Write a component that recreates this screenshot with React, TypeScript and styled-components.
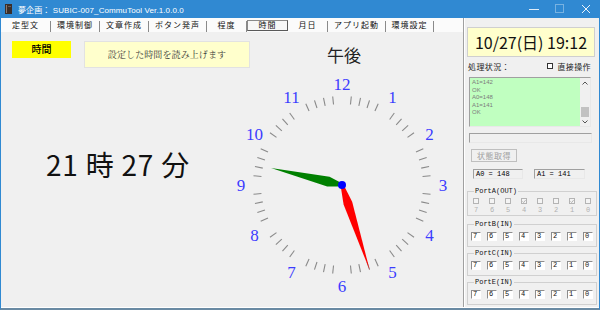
import React from "react";
import styled, { createGlobalStyle } from "styled-components";

const GlobalStyle = createGlobalStyle`
  html, body { margin: 0; padding: 0; background: #f0f0f0; }
  body { font-family: "Noto Sans CJK JP", "Noto Sans", sans-serif; color: #000; }
  * { box-sizing: border-box; }
`;

const Window = styled.div`
  width: 600px;
  height: 310px;
  display: flex;
  flex-direction: column;
  border-left: 1px solid #3089d2;
  border-right: 1px solid #3089d2;
  border-bottom: 2px solid #6a8aa3;
  background: #f0f0f0;
  overflow: hidden;
`;

const TitleBar = styled.div`
  height: 18px;
  flex: none;
  display: flex;
  align-items: center;
  padding-left: 4px;
  background: #3089d2;
  color: #fff;
`;

const TitleText = styled.span`
  margin-left: 6px;
  font-family: "Liberation Sans", "Noto Sans CJK JP", sans-serif;
  font-size: 8px;
  letter-spacing: 0.1px;
  white-space: nowrap;
`;

const Controls = styled.div`
  margin-left: auto;
  display: flex;
  height: 100%;
`;

const ControlButton = styled.div`
  width: 26px;
  height: 100%;
  display: flex;
  align-items: center;
  justify-content: center;
`;

const Body = styled.div`
  flex: 1;
  display: flex;
  border-bottom: 1px solid #fff;
  min-height: 0;
`;

const LeftPane = styled.div`
  width: 462px;
  display: flex;
  flex-direction: column;
`;

const TabRow = styled.div`
  height: 14px;
  display: flex;
  background: #fbfbfb;
`;

const Tab = styled.div<{ $w: number; $active?: boolean }>`
  width: ${(p) => p.$w}px;
  height: 11px;
  margin-top: ${(p) => (p.$active ? 2 : 3)}px;
  display: flex;
  align-items: center;
  justify-content: center;
  padding-bottom: ${(p) => (p.$active ? 1 : 3)}px;
  font-size: 8px;
  letter-spacing: 1px;
  line-height: 1;
  white-space: nowrap;
  color: #111;
  border-right: 1px solid #8a8a8a;
  ${(p) =>
    p.$active &&
    `
    border: 1px solid #8a8a8a;
    border-right-color: #5a5a5a;
    border-bottom-color: #5a5a5a;
    background: #f7f7f7;
  `}
`;

const LeftContent = styled.div`
  flex: 1;
  display: flex;
  flex-direction: column;
  padding: 9px 0 0 11px;
`;

const TopRow = styled.div`
  height: 27px;
  display: flex;
  align-items: flex-start;
`;

const ModeLabel = styled.div`
  width: 59px;
  height: 17px;
  background: #ffff00;
  display: flex;
  justify-content: center;
  padding-top: 2px;
  font-size: 10px;
  line-height: 11px;
  font-weight: 500;
`;

const InfoBox = styled.div`
  margin-left: 13px;
  width: 166px;
  height: 27px;
  background: #ffffcc;
  border: 1px solid #e2e2e2;
  display: flex;
  align-items: center;
  justify-content: center;
  font-family: "Noto Serif CJK JP", "Noto Sans CJK JP", serif;
  font-size: 9px;
  color: #333;
  letter-spacing: 0.1px;
`;

const Period = styled.div`
  margin-left: 77px;
  align-self: center;
  font-size: 17px;
  line-height: 1;
  color: #222;
`;

const ClockRow = styled.div`
  display: flex;
  margin-top: 7px;
`;

const TimeText = styled.div`
  width: 220px;
  padding: 74px 8px 0 0;
  text-align: center;
  font-size: 28px;
  line-height: 1.1;
  color: #111;
  white-space: nowrap;
  letter-spacing: 0.8px;
`;

const ClockFace = styled.svg`
  width: 220px;
  height: 220px;
  flex: none;
`;

const RightPane = styled.div`
  width: 136px;
  display: flex;
  flex-direction: column;
  border-left: 1px solid #a0a0a0;
  box-shadow: inset 1px 0 #fff;
  padding: 9px 0 0 3px;
`;

const DateBox = styled.div`
  width: 128px;
  height: 30px;
  background: #ffffcc;
  border: 1px solid #cfcfcf;
  display: flex;
  align-items: center;
  justify-content: center;
  font-size: 16px;
  color: #111;
  white-space: nowrap;
`;

const StatusRow = styled.div`
  margin-top: 4px;
  height: 10px;
  display: flex;
  align-items: center;
  padding: 0 8px 0 1px;
  font-size: 8px;
  letter-spacing: 0.4px;
  color: #222;
`;

const CheckLabel = styled.label`
  margin-left: auto;
  display: flex;
  align-items: center;
  gap: 4px;
`;

const Check = styled.span<{ $disabled?: boolean }>`
  width: 6px;
  height: 6px;
  flex: none;
  border: 1px solid ${(p) => (p.$disabled ? "#b4b4b4" : "#333")};
  background: ${(p) => (p.$disabled ? "#f4f4f4" : "#fff")};
  display: flex;
  align-items: center;
  justify-content: center;
`;

const LogBox = styled.div`
  margin: 6px 0 0 2px;
  width: 122px;
  height: 50px;
  display: flex;
  border: 1px solid #a0a0a0;
  border-right-color: #e8e8e8;
  border-bottom-color: #e8e8e8;
  background: #c0ffc0;
`;

const LogText = styled.div`
  flex: 1;
  padding: 1px 0 0 2px;
  font-family: "Liberation Sans", sans-serif;
  font-size: 6px;
  line-height: 7.5px;
  color: #7c7c7c;
`;

const ScrollBar = styled.div`
  width: 10px;
  background: #f0f0f0;
  display: flex;
  flex-direction: column;
  align-items: center;
  justify-content: space-between;
  padding: 3px 0 2px;
`;

const ScrollThumb = styled.div`
  width: 8px;
  height: 10px;
  margin-top: 19px;
  background: #c2c2c2;
`;

const EmptyField = styled.div`
  margin: 6px 0 0 2px;
  width: 123px;
  height: 10px;
  border: 1px solid #a0a0a0;
  border-right-color: #e8e8e8;
  border-bottom-color: #e8e8e8;
  background: #f0f0f0;
`;

const DisabledButton = styled.button`
  margin: 6px 0 0 4px;
  width: 46px;
  height: 13px;
  padding: 0;
  border: 1px solid #bfbfbf;
  background: #f0f0f0;
  color: #a0a0a0;
  font-family: "Noto Sans CJK JP", sans-serif;
  font-size: 8px;
  letter-spacing: 0.5px;
  line-height: 1;
`;

const ValueRow = styled.div`
  margin: 7px 0 0 6px;
  display: flex;
  gap: 11px;
`;

const ValueField = styled.div<{ $w: number }>`
  width: ${(p) => p.$w}px;
  height: 10px;
  border: 1px solid #a0a0a0;
  border-right-color: #e8e8e8;
  border-bottom-color: #e8e8e8;
  background: #f0f0f0;
  padding-left: 2px;
  font-family: "Liberation Mono", monospace;
  font-size: 7px;
  line-height: 8px;
  white-space: pre;
`;

const PortGroup = styled.fieldset<{ $top: number; $h: number }>`
  margin: ${(p) => p.$top}px 0 0 0;
  width: 130px;
  height: ${(p) => p.$h}px;
  padding: 0;
  border: 1px solid #d0d0d0;
  min-inline-size: 0;
`;

const PortLegend = styled.legend`
  margin-left: 6px;
  padding: 0 1px;
  font-family: "Liberation Mono", monospace;
  font-size: 7px;
  line-height: 8px;
  color: #111;
`;

const BitGrid = styled.div<{ $pt: number }>`
  display: grid;
  grid-template-columns: repeat(8, 1fr);
  padding-top: ${(p) => p.$pt}px;
`;

const BitCell = styled.div`
  display: flex;
  flex-direction: column;
  align-items: center;
  gap: 3px;
`;

const BitNumber = styled.span`
  font-family: "Liberation Mono", monospace;
  font-size: 7px;
  line-height: 6px;
  color: #b0b0b0;
`;

const BitBox = styled.div`
  width: 10px;
  height: 9px;
  border: 1px solid #8c8c8c;
  border-right-color: #fff;
  border-bottom-color: #fff;
  background: #fff;
  padding-left: 1px;
  font-family: "Liberation Mono", monospace;
  font-size: 7px;
  line-height: 7px;
  color: #111;
`;

const tabs = [
  { label: "定型文", w: 50 },
  { label: "環境制御", w: 49 },
  { label: "文章作成", w: 49 },
  { label: "ボタン発声", w: 58 },
  { label: "程度", w: 40 },
  { label: "時間", w: 41, active: true },
  { label: "月日", w: 40 },
  { label: "アプリ起動", w: 58 },
  { label: "環境設定", w: 48 },
];

const bits = [7, 6, 5, 4, 3, 2, 1, 0];
const portAChecked = [4, 1];
const logLines = ["A1=142", "OK", "A0=148", "A1=141", "OK"];

const CheckMark = () => (
  <svg width="5" height="5" viewBox="0 0 5 5">
    <path d="M0.6 2.4 L2 3.8 L4.5 0.8" fill="none" stroke="#9a9a9a" strokeWidth="0.9" />
  </svg>
);

const Clock = ({ hour, minute }: { hour: number; minute: number }) => {
  const c = 110;
  const ticks = [];
  for (let m = 0; m < 60; m++) {
    if (m % 5 === 0) continue;
    const a = (m * 6 * Math.PI) / 180;
    const s = Math.sin(a);
    const k = Math.cos(a);
    ticks.push(
      <line key={m} x1={c + 81 * s} y1={c - 81 * k} x2={c + 89 * s} y2={c - 89 * k} />
    );
  }
  const nums = Array.from({ length: 12 }, (_, i) => {
    const h = i + 1;
    const a = (h * 30 * Math.PI) / 180;
    return (
      <text key={h} x={c + 101 * Math.sin(a)} y={c - 101 * Math.cos(a)}>
        {h}
      </text>
    );
  });
  const minAngle = minute * 6;
  const hourAngle = ((hour % 12) + minute / 60) * 30;
  return (
    <ClockFace viewBox="0 0 220 220">
      <g stroke="#8a8a8a" strokeWidth="1.1">{ticks}</g>
      <g
        fill="#3c3cff"
        fontFamily="'Liberation Serif', serif"
        fontSize="17"
        textAnchor="middle"
        dominantBaseline="central"
      >
        {nums}
      </g>
      <polygon
        points="-1.5,0 1.5,0 5,-14 0,-73 -5,-14"
        fill="#008000"
        transform={`translate(${c} ${c}) rotate(${hourAngle})`}
      />
      <polygon
        points="-1.5,0 1.5,0 4.5,-19 0,-90 -4.5,-19"
        fill="#ff0000"
        transform={`translate(${c} ${c}) rotate(${minAngle})`}
      />
      <circle cx={c} cy={c} r="4" fill="#0000ff" />
    </ClockFace>
  );
};

export default function App() {
  return (
    <>
      <GlobalStyle />
      <Window>
        <TitleBar>
          <svg width="7" height="10" viewBox="0 0 7 10">
            <rect x="0" y="0" width="7" height="10" fill="#3b2f2a" />
            <rect x="1" y="1" width="1" height="8" fill="#8a7a70" />
            <rect x="3" y="2" width="3" height="1" fill="#6d5d55" />
          </svg>
          <TitleText>夢企画： SUBIC-007_CommuTool Ver.1.0.0.0</TitleText>
          <Controls>
            <ControlButton>
              <svg width="10" height="10" viewBox="0 0 10 10">
                <line x1="0" y1="5.5" x2="10" y2="5.5" stroke="rgba(255,255,255,0.85)" />
              </svg>
            </ControlButton>
            <ControlButton>
              <svg width="10" height="10" viewBox="0 0 10 10">
                <rect x="0.5" y="0.5" width="8" height="8" fill="none" stroke="rgba(255,255,255,0.35)" />
              </svg>
            </ControlButton>
            <ControlButton>
              <svg width="10" height="10" viewBox="0 0 10 10">
                <path d="M1 1 L9 9 M9 1 L1 9" stroke="rgba(255,255,255,0.9)" strokeWidth="1" />
              </svg>
            </ControlButton>
          </Controls>
        </TitleBar>
        <Body>
          <LeftPane>
            <TabRow>
              {tabs.map((t) => (
                <Tab key={t.label} $w={t.w} $active={t.active}>
                  {t.label}
                </Tab>
              ))}
            </TabRow>
            <LeftContent>
              <TopRow>
                <ModeLabel>時間</ModeLabel>
                <InfoBox>設定した時間を読み上げます</InfoBox>
                <Period>午後</Period>
              </TopRow>
              <ClockRow>
                <TimeText>21 時 27 分</TimeText>
                <Clock hour={21} minute={27} />
              </ClockRow>
            </LeftContent>
          </LeftPane>
          <RightPane>
            <DateBox>10/27(日) 19:12</DateBox>
            <StatusRow>
              <span>処理状況：</span>
              <CheckLabel>
                <Check />
                直接操作
              </CheckLabel>
            </StatusRow>
            <LogBox>
              <LogText>
                {logLines.map((l, i) => (
                  <div key={i}>{l}</div>
                ))}
              </LogText>
              <ScrollBar>
                <svg width="6" height="4" viewBox="0 0 6 4">
                  <path d="M0.5 3.5 L3 1 L5.5 3.5" fill="none" stroke="#555" />
                </svg>
                <ScrollThumb />
                <svg width="6" height="4" viewBox="0 0 6 4">
                  <path d="M0.5 0.5 L3 3 L5.5 0.5" fill="none" stroke="#555" />
                </svg>
              </ScrollBar>
            </LogBox>
            <EmptyField />
            <DisabledButton disabled>状態取得</DisabledButton>
            <ValueRow>
              <ValueField $w={50}>A0 = 148</ValueField>
              <ValueField $w={51}>A1 = 141</ValueField>
            </ValueRow>
            <PortGroup $top={8} $h={29}>
              <PortLegend>PortA(OUT)</PortLegend>
              <BitGrid $pt={3}>
                {bits.map((b) => (
                  <BitCell key={b}>
                    <Check $disabled>{portAChecked.includes(b) && <CheckMark />}</Check>
                    <BitNumber>{b}</BitNumber>
                  </BitCell>
                ))}
              </BitGrid>
            </PortGroup>
            {["PortB(IN)", "PortC(IN)", "PortE(IN)"].map((name, i) => (
              <PortGroup key={name} $top={i === 0 ? 4 : 2} $h={27}>
                <PortLegend>{name}</PortLegend>
                <BitGrid $pt={4}>
                  {bits.map((b) => (
                    <BitCell key={b}>
                      <BitBox>{b}</BitBox>
                    </BitCell>
                  ))}
                </BitGrid>
              </PortGroup>
            ))}
          </RightPane>
        </Body>
      </Window>
    </>
  );
}
